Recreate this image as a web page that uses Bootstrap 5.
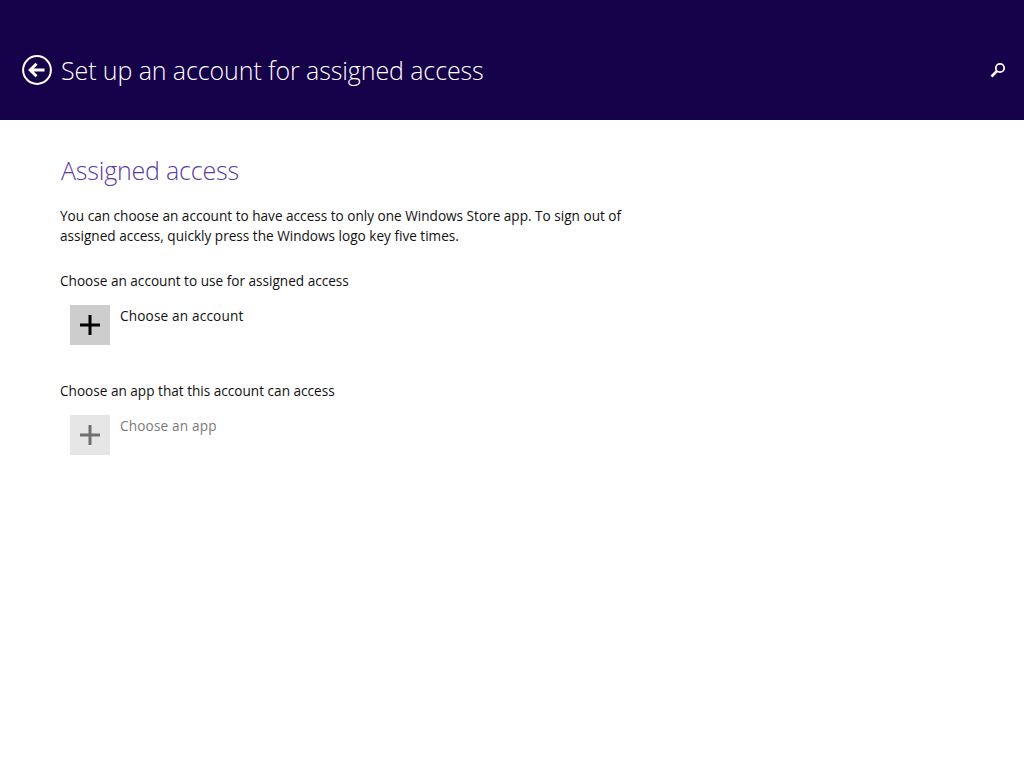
<!DOCTYPE html>
<html lang="en">
<head>
<meta charset="utf-8">
<title>Assigned access</title>
<link href="https://cdn.jsdelivr.net/npm/bootstrap@5.3.0/dist/css/bootstrap.min.css" rel="stylesheet">
<style>
html, body { height: 100%; }
body { font-family: "Open Sans", "Noto Sans", sans-serif; color: #000; background: #fff; }
.hdr { height: 120px; background: #15004a; color: #fff; padding: 51px 18px 0 22px; }
.hdr-title { font-size: 25px; font-weight: 300; line-height: 38px; margin: 0; letter-spacing: -.1px; }
.back-ico { width: 30px; height: 30px; margin-right: 9px; margin-top: 4px; }
.search-ico { width: 16px; height: 16px; margin-top: 11px; }
.main-area { padding: 32px 0 0 60px; }
.sec-title { font-size: 25px; font-weight: 300; line-height: 36px; color: #5b3aa5; margin: 0 0 18px 1px; letter-spacing: -.2px; }
.txt { font-size: 13.6px; line-height: 20px; margin: 0; letter-spacing: 0; color: #111; }
.intro { width: 580px; margin-bottom: 25px; }
.pick { margin: 14px 0 36px 10px; gap: 10px; }
.pick-last { margin-bottom: 0; }
.pick .txt { letter-spacing: .17px; padding-top: 1px; }
.plus-box { width: 40px; height: 40px; background: #cdcdcd; }
.plus-off { background: #e6e6e6; }
.plus-box svg { width: 20px; height: 20px; }
.pick .off { color: #7a7a7a; }
</style>
</head>
<body>
<header class="hdr d-flex justify-content-between align-items-start">
  <div class="d-flex align-items-start">
    <svg class="back-ico" viewBox="0 0 30 30" fill="none" stroke="#fff" aria-hidden="true">
      <circle cx="15" cy="15" r="13.9" stroke-width="2"/>
      <path d="M22.5 15H8.5M14.5 8.8 8.2 15l6.3 6.2" stroke-width="3"/>
    </svg>
    <h1 class="hdr-title">Set up an account for assigned access</h1>
  </div>
  <svg class="search-ico" viewBox="0 0 16 16" fill="none" stroke="#fff" aria-hidden="true">
    <circle cx="10" cy="6" r="4.2" stroke-width="1.8"/>
    <path d="M7 9 1.5 14.5" stroke-width="2.6"/>
  </svg>
</header>
<main class="main-area">
  <h2 class="sec-title">Assigned access</h2>
  <p class="txt intro">You can choose an account to have access to only one Windows Store app. To sign out of assigned access, quickly press the Windows logo key five times.</p>
  <p class="txt">Choose an account to use for assigned access</p>
  <div class="pick d-flex align-items-start">
    <div class="plus-box d-flex align-items-center justify-content-center">
      <svg viewBox="0 0 20 20" aria-hidden="true"><path d="M10 0v20M0 10h20" stroke="#000" stroke-width="3"/></svg>
    </div>
    <span class="txt">Choose an account</span>
  </div>
  <p class="txt">Choose an app that this account can access</p>
  <div class="pick pick-last d-flex align-items-start">
    <div class="plus-box plus-off d-flex align-items-center justify-content-center">
      <svg viewBox="0 0 20 20" aria-hidden="true"><path d="M10 0v20M0 10h20" stroke="#707070" stroke-width="3"/></svg>
    </div>
    <span class="txt off">Choose an app</span>
  </div>
</main>
<script src="https://cdn.jsdelivr.net/npm/bootstrap@5.3.0/dist/js/bootstrap.bundle.min.js"></script>
</body>
</html>
